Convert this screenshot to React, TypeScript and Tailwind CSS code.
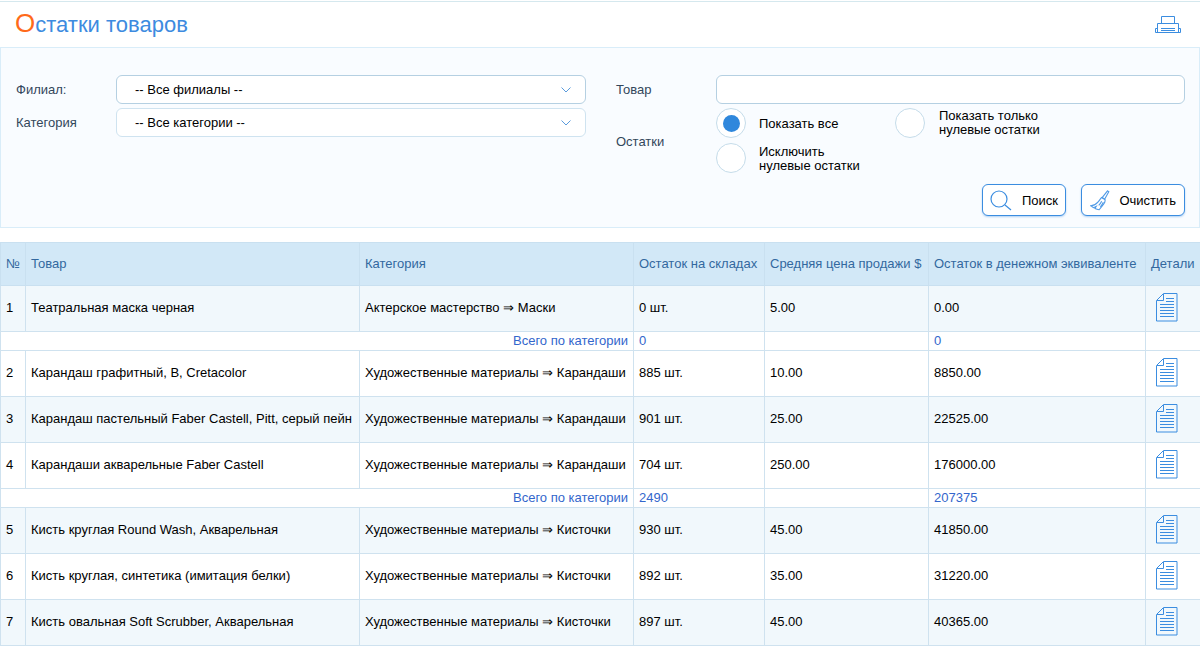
import React from 'react';

const rows = [
  { type: 'row', n: 1, name: 'Театральная маска черная', cat: 'Актерское мастерство ⇒ Маски', qty: '0 шт.', price: '5.00', total: '0.00', tint: true },
  { type: 'sum', qty: '0', total: '0' },
  { type: 'row', n: 2, name: 'Карандаш графитный, B, Cretacolor', cat: 'Художественные материалы ⇒ Карандаши', qty: '885 шт.', price: '10.00', total: '8850.00', tint: false },
  { type: 'row', n: 3, name: 'Карандаш пастельный Faber Castell, Pitt, серый пейн', cat: 'Художественные материалы ⇒ Карандаши', qty: '901 шт.', price: '25.00', total: '22525.00', tint: true },
  { type: 'row', n: 4, name: 'Карандаши акварельные Faber Castell', cat: 'Художественные материалы ⇒ Карандаши', qty: '704 шт.', price: '250.00', total: '176000.00', tint: false },
  { type: 'sum', qty: '2490', total: '207375' },
  { type: 'row', n: 5, name: 'Кисть круглая Round Wash, Акварельная', cat: 'Художественные материалы ⇒ Кисточки', qty: '930 шт.', price: '45.00', total: '41850.00', tint: true },
  { type: 'row', n: 6, name: 'Кисть круглая, синтетика (имитация белки)', cat: 'Художественные материалы ⇒ Кисточки', qty: '892 шт.', price: '35.00', total: '31220.00', tint: false },
  { type: 'row', n: 7, name: 'Кисть овальная Soft Scrubber, Акварельная', cat: 'Художественные материалы ⇒ Кисточки', qty: '897 шт.', price: '45.00', total: '40365.00', tint: true },
];

const PrinterIcon = () => (
  <svg width="26" height="17" viewBox="0 0 26 17" fill="none" stroke="#3b8de0" strokeWidth="1">
    <path d="M6.5 7.5V.5h13v7" />
    <path d="M2.5 7.5h21v9h-21z" />
    <path d="M2.5 12.5H.5v4h25v-4h-2" />
    <path d="M6 12.5h14M6 14.5h14" />
  </svg>
);

const DocIcon = () => (
  <svg width="22" height="29" viewBox="0 0 22 29" fill="none" stroke="#3b8de0" strokeWidth="1">
    <path d="M7.5.5h13.5v27.5H.5V7.5z" />
    <path d="M7.5 1v6.5H1" />
    <path d="M10 5.5h8M10 8.5h8M4 11.5h14M4 14.5h14M4 17.5h14M4 20.5h14M4 23.5h14" />
  </svg>
);

const SearchIcon = () => (
  <svg width="22" height="21" viewBox="0 0 22 21" fill="none" stroke="#3b8de0" strokeWidth="1.2">
    <circle cx="9" cy="9" r="8" />
    <path d="M15 15l6 5" />
  </svg>
);

const BroomIcon = () => (
  <svg width="20" height="21" viewBox="0 0 23 25" fill="none" stroke="#4f9ae6" strokeWidth="1.3">
    <path d="M20.5 1l1.500 1-5 9-3-2z" />
    <path d="M13.500 9l4 2.500c.3 1.800-.3 3.500-1.500 5-1.500 2-3.500 4.500-5.500 7-2-.3-3.500-.8-5-1.500l1.500-2.500-3 1.500c-1.200-.6-2.300-1.300-3.500-2.300 3.500-.2 6.500-1.700 8.500-4.200 1.500-1.800 2.500-3.300 4-5z" />
    <path d="M13.500 13.500c-.8 1.700-2 3.300-3.500 4.800M15.500 14.500c-.8 1.700-2 3.500-3.500 5.500" />
  </svg>
);

const Chevron = () => (
  <svg width="10" height="6" viewBox="0 0 10 6" fill="none" stroke="#5a9bdc" strokeWidth="1">
    <path d="M.5.5L5 5 9.5.5" />
  </svg>
);

const Radio = ({ checked = false }: { checked?: boolean }) => (
  <span className="flex h-[30px] w-[30px] shrink-0 items-center justify-center rounded-full border border-[#c5dcea] bg-white">
    {checked && <span className="h-[17px] w-[17px] rounded-full bg-[#2f87dc]" />}
  </span>
);

const Select = ({ label, dark }: { label: string; dark?: boolean }) => (
  <div className={`flex h-[29px] w-[470px] items-center justify-between rounded-[6px] border bg-white pl-[18px] pr-[14px] text-black ${dark ? 'border-[#b5d0e2]' : 'border-[#cfe3f0]'}`}>
    <span>{label}</span>
    <Chevron />
  </div>
);

const th = 'border border-[#c9e0f0] px-[5px] text-left font-normal text-[#33689f]';
const td = 'border border-[#cfe2ef] px-[5px] pb-[2px] text-black';
const sumTd = 'border border-[#cfe2ef] px-[5px] pb-[2px] leading-none';

export default function App() {
  return (
    <div className="h-[647px] overflow-hidden bg-white text-[13px] text-[#33475b] font-['Liberation_Sans',Arial,sans-serif]">
      <div className="mt-px flex h-[46px] items-center justify-between border-t border-[#d5e8ee] pl-[15px] pr-[19px]">
        <h1 className="-translate-y-0.5 text-[22px] leading-none font-normal text-[#3d8be0]">
          <span className="text-[26px] text-[#ff6a1a]">О</span>статки товаров
        </h1>
        <PrinterIcon />
      </div>

      <div className="flex h-[181px] border border-[#d9edf9] bg-[#f9fcff] pt-[27px]">
        <div className="w-[615px] pl-[15px]">
          <div className="flex h-[29px] items-center">
            <span className="w-[100px]">Филиал:</span>
            <Select label="-- Все филиалы --" dark />
          </div>
          <div className="mt-1 flex h-[29px] items-center">
            <span className="w-[100px]">Категория</span>
            <Select label="-- Все категории --" />
          </div>
        </div>
        <div className="w-[569px]">
          <div className="flex h-[29px] items-center">
            <span className="w-[100px]">Товар</span>
            <div className="h-[29px] w-[469px] rounded-[6px] border border-[#b5d0e2] bg-white" />
          </div>
          <div className="mt-1 flex items-center">
            <span className="w-[100px] pt-[2px]">Остатки</span>
            <div className="grid grid-cols-[179px_1fr] gap-y-[5px] text-black">
              <div className="flex items-center gap-[13px]">
                <Radio checked />
                <span className="pt-[2px]">Показать все</span>
              </div>
              <div className="flex items-center gap-[14px]">
                <Radio />
                <span className="leading-[14px]">Показать только<br />нулевые остатки</span>
              </div>
              <div className="flex items-center gap-[13px]">
                <Radio />
                <span className="pt-[2px] leading-[14px]">Исключить<br />нулевые остатки</span>
              </div>
            </div>
          </div>
          <div className="mt-[11px] flex justify-end gap-[15px] text-black">
            <button className="flex h-[32px] w-[84px] items-center justify-between rounded-[6px] border border-[#3b8de0] bg-white pl-[7px] pr-[7px] shadow-[0_1px_2px_rgba(59,141,224,0.4)]">
              <SearchIcon />
              <span className="pt-[2px]">Поиск</span>
            </button>
            <button className="flex h-[32px] w-[104px] items-center justify-between rounded-[6px] border border-[#3b8de0] bg-white pl-[8px] pr-[8px] shadow-[0_1px_2px_rgba(59,141,224,0.4)]">
              <BroomIcon />
              <span className="pt-[2px]">Очистить</span>
            </button>
          </div>
        </div>
      </div>

      <table className="mt-[14px] w-[1200px] table-fixed border-collapse">
        <colgroup>
          <col className="w-[25px]" />
          <col className="w-[334px]" />
          <col className="w-[274px]" />
          <col className="w-[131px]" />
          <col className="w-[164px]" />
          <col className="w-[217px]" />
          <col className="w-[55px]" />
        </colgroup>
        <thead>
          <tr className="h-[43px] bg-[#d2e8f7]">
            <th className={th}>№</th>
            <th className={th}>Товар</th>
            <th className={th}>Категория</th>
            <th className={th}>Остаток на складах</th>
            <th className={th}>Средняя цена продажи $</th>
            <th className={th}>Остаток в денежном эквиваленте</th>
            <th className={th}>Детали</th>
          </tr>
        </thead>
        <tbody>
          {rows.map((r, i) =>
            r.type === 'sum' ? (
              <tr key={i} className="h-[19px] bg-white text-[#3366cc]">
                <td colSpan={3} className={`${sumTd} text-right`}>Всего по категории</td>
                <td className={sumTd}>{r.qty}</td>
                <td className={sumTd}></td>
                <td className={sumTd}>{r.total}</td>
                <td className={sumTd}></td>
              </tr>
            ) : (
              <tr key={i} className={`h-[46px] ${r.tint ? 'bg-[#f1f8fc]' : 'bg-white'}`}>
                <td className={td}>{r.n}</td>
                <td className={`${td} whitespace-nowrap`}>{r.name}</td>
                <td className={`${td} whitespace-nowrap`}>{r.cat}</td>
                <td className={td}>{r.qty}</td>
                <td className={td}>{r.price}</td>
                <td className={td}>{r.total}</td>
                <td className="border border-[#cfe2ef] pb-[2px] pl-[10px]">
                  <div className="flex"><DocIcon /></div>
                </td>
              </tr>
            )
          )}
        </tbody>
      </table>
    </div>
  );
}
